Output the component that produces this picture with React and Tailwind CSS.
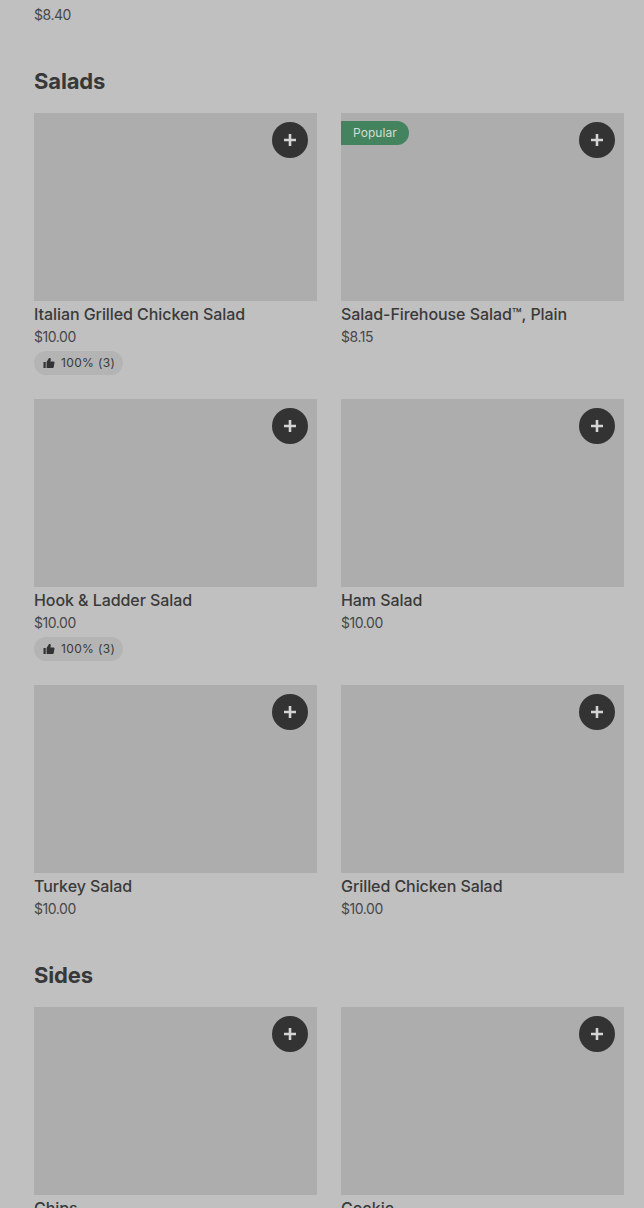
const salads = [
  { name: 'Italian Grilled Chicken Salad', price: '$10.00', rating: '100% (3)' },
  { name: 'Salad-Firehouse Salad™, Plain', price: '$8.15', popular: true },
  { name: 'Hook & Ladder Salad', price: '$10.00', rating: '100% (3)' },
  { name: 'Ham Salad', price: '$10.00' },
  { name: 'Turkey Salad', price: '$10.00' },
  { name: 'Grilled Chicken Salad', price: '$10.00' },
]

const sides = [
  { name: 'Chips', price: '$2.00' },
  { name: 'Cookie', price: '$2.00' },
]

function ThumbIcon() {
  return (
    <svg viewBox="0 0 12 12" className="w-3 h-3 shrink-0" fill="#333333">
      <path d="M0.5 5h2.2v6H0.5z" />
      <path d="M3.6 5 6 1h.6c.8 0 1.3.6 1.2 1.4L7.5 4.4h3c.7 0 1.1.6 1 1.2l-.8 4.6c-.1.5-.5.8-1 .8H3.6z" />
    </svg>
  )
}

function PlusIcon() {
  return (
    <svg viewBox="0 0 12 12" className="w-3 h-3" fill="#d4d4d4">
      <path d="M4.7 0h2.6v4.7H12v2.6H7.3V12H4.7V7.3H0V4.7h4.7z" />
    </svg>
  )
}

function ItemCard({ item }) {
  return (
    <div className="min-h-[262px]">
      <div className="relative h-[188px] bg-[#adadad]">
        {item.popular && (
          <div className="absolute top-2 left-0 h-6 pl-3 pr-3 flex items-center rounded-r-full bg-[#43845f] text-xs tracking-[0.05px] text-[#d3ddd6]">
            Popular
          </div>
        )}
        <button className="absolute top-[9px] right-[9px] w-9 h-9 rounded-full bg-[#333333] flex items-center justify-center">
          <PlusIcon />
        </button>
      </div>
      <div className="mt-[3px] text-base leading-5 font-medium tracking-[-0.07px] text-[#3a3a3a]">{item.name}</div>
      <div className="mt-[3px] text-sm leading-5 tracking-[-0.45px] text-[#484848]">{item.price}</div>
      {item.rating && (
        <div className="mt-1 h-6 w-fit pl-[9px] pr-2 flex items-center gap-[6px] rounded-full bg-[#b4b4b4] text-xs tracking-[0.35px] text-[#3a3a3a]">
          <ThumbIcon />
          {item.rating}
        </div>
      )}
    </div>
  )
}

function Section({ title, items }) {
  return (
    <section>
      <h2 className="text-[22px] leading-7 font-bold tracking-[-0.15px] text-[#383838] mb-[18px]">{title}</h2>
      <div className="grid grid-cols-2 gap-x-6 gap-y-6">
        {items.map(item => <ItemCard key={item.name} item={item} />)}
      </div>
    </section>
  )
}

export default function App() {
  return (
    <div className="h-[1208px] overflow-hidden bg-[#c0c0c0] pl-[34px] pr-5 pt-[5px] font-['Inter',sans-serif]">
      <div className="text-sm leading-5 tracking-[-0.45px] text-[#484848]">$8.40</div>
      <div className="mt-[42px] flex flex-col gap-[14px]">
        <Section title="Salads" items={salads} />
        <Section title="Sides" items={sides} />
      </div>
    </div>
  )
}
